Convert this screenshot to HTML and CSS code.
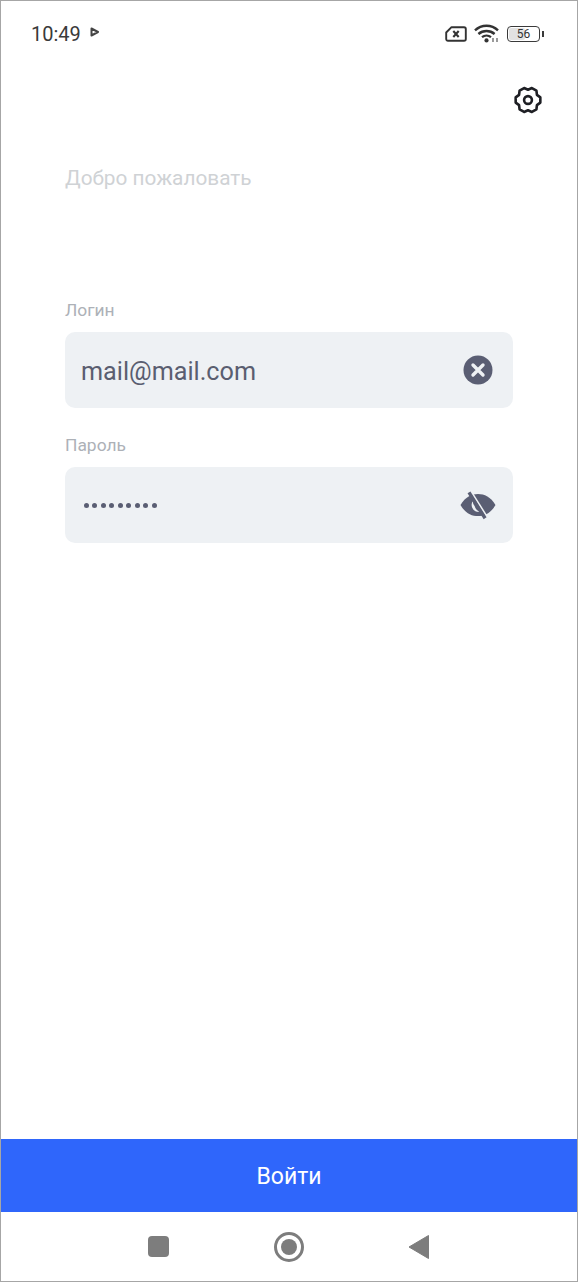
FILE: index.html
```html
<!DOCTYPE html>
<html lang="ru">
<head>
    <meta charset="UTF-8">
    <meta name="viewport" content="width=device-width, initial-scale=1.0">
    <title>Вход</title>
    <link rel="stylesheet" href="styles.css">
</head>
<body>

<div class="screen">
    <header class="status-bar">
        <div class="status-left">
            <span class="time">10:49</span>
            <svg class="play-icon" width="10" height="10" viewBox="0 0 10 10">
                <path d="M1.5 1.5 L8 5 L1.5 8.5 Z" fill="none" stroke="#444" stroke-width="2" stroke-linejoin="round"/>
            </svg>
        </div>
        <div class="status-right">
            <svg width="22" height="16" viewBox="0 0 22 16">
                <path d="M6.5 1.2 H19 a1.8 1.8 0 0 1 1.8 1.8 V13 a1.8 1.8 0 0 1 -1.8 1.8 H3 a1.8 1.8 0 0 1 -1.8 -1.8 V6.5 Z" fill="none" stroke="#333" stroke-width="1.9" stroke-linejoin="round"/>
                <path d="M8.3 5 L13.7 11 M13.7 5 L8.3 11" stroke="#333" stroke-width="2.1"/>
            </svg>
            <svg width="26" height="19" viewBox="0 0 26 19">
                <path d="M1 6.4 C7.5 0.2 17.5 0.2 24 6.4" fill="none" stroke="#333" stroke-width="2.4"/>
                <path d="M4.4 10 C9 6 16 6 20.6 10" fill="none" stroke="#333" stroke-width="2.4"/>
                <path d="M8 13.2 C10.6 11 14.4 11 17 13.2" fill="none" stroke="#333" stroke-width="2.2"/>
                <circle cx="12.5" cy="16.4" r="2.1" fill="#333"/>
                <path d="M19 18 V14 M23 14 V18" stroke="#666" stroke-width="1.3"/>
            </svg>
            <div class="battery">
                <div class="battery-body">
                    <span class="battery-level"></span>
                    <span class="battery-text">56</span>
                </div>
                <span class="battery-tip"></span>
            </div>
        </div>
    </header>

    <div class="settings-row">
        <svg width="30" height="30" viewBox="0 0 30 30">
            <path d="M27.33 12.38 L27.33 17.62 L23.92 20.15 L23.43 24.36 L18.89 26.98 L15 25.3 L11.11 26.98 L6.57 24.36 L6.08 20.15 L2.67 17.62 L2.67 12.38 L6.08 9.85 L6.57 5.64 L11.11 3.02 L15 4.7 L18.89 3.02 L23.43 5.64 L23.92 9.85 Z" fill="none" stroke="#1e1f24" stroke-width="2.6" stroke-linejoin="round"/>
            <circle cx="15" cy="15" r="3.9" fill="none" stroke="#1e1f24" stroke-width="2.6"/>
        </svg>
    </div>

    <main class="content">
        <h1 class="title">Добро пожаловать</h1>

        <label class="field-label field-label-login">Логин</label>
        <div class="field">
            <span class="field-value">mail@mail.com</span>
            <svg class="field-icon" width="30" height="30" viewBox="0 0 30 30">
                <circle cx="15" cy="15" r="14.5" fill="#5a5e73"/>
                <path d="M10 10 L20 20 M20 10 L10 20" stroke="#eef1f4" stroke-width="3.4" stroke-linecap="round"/>
            </svg>
        </div>

        <label class="field-label field-label-password">Пароль</label>
        <div class="field">
            <span class="field-dots">
                <i></i><i></i><i></i><i></i><i></i><i></i><i></i><i></i><i></i>
            </span>
            <svg class="field-icon eye-icon" width="36" height="32" viewBox="0 0 34 30">
                <path d="M0.5 15 C5 7 11 4.5 17 4.5 C23 4.5 29 7 33.5 15 C29 23 23 25.5 17 25.5 C11 25.5 5 23 0.5 15 Z" fill="#5a5e73"/>
                <path d="M12 11.5 A6.5 6.5 0 0 0 16 21.3 L18.6 21.6 A8.5 8.5 0 0 1 13.8 16 A8 8 0 0 1 12 11.5 Z" fill="#eef1f4"/>
                <path d="M10.6 2.4 L25.6 26.4" stroke="#eef1f4" stroke-width="1.8"/>
                <path d="M8.5 3 L23.7 27.5" stroke="#5a5e73" stroke-width="3.2"/>
            </svg>
        </div>
    </main>

    <button class="login-button">Войти</button>

    <nav class="nav-bar">
        <span class="nav-square"></span>
        <span class="nav-circle"><span></span></span>
        <svg width="22" height="26" viewBox="0 0 22 26">
            <path d="M20.5 1.5 V24.5 L1 13 Z" fill="#7d7d7d" stroke="#7d7d7d" stroke-width="1" stroke-linejoin="round"/>
        </svg>
    </nav>
</div>

</body>
</html>
```

FILE: styles.css
```css
* {
    box-sizing: border-box;
}
body {
    margin: 0;
    font-family: Roboto, 'Liberation Sans', sans-serif;
    background-color: #ffffff;
}
.screen {
    width: 578px;
    height: 1282px;
    border: 1px solid #a6a6a6;
    display: flex;
    flex-direction: column;
}
.status-bar {
    height: 64px;
    padding: 1px 33px 0 30px;
    display: flex;
    align-items: center;
    justify-content: space-between;
    flex-shrink: 0;
}
.status-left {
    display: flex;
    align-items: center;
    gap: 9px;
}
.time {
    font-size: 20px;
    color: #3a3a3a;
}
.play-icon {
    margin-top: -3px;
}
.status-right {
    display: flex;
    align-items: center;
    gap: 7px;
}
.battery {
    display: flex;
    align-items: center;
    gap: 2px;
}
.battery-body {
    width: 33px;
    height: 16px;
    border: 1.5px solid #3a3a3a;
    border-radius: 4px;
    position: relative;
    display: flex;
    align-items: center;
    justify-content: center;
}
.battery-level {
    position: absolute;
    left: 1px;
    top: 1px;
    bottom: 1px;
    width: 16px;
    background-color: #e2e2e2;
    border-radius: 2px;
}
.battery-text {
    position: relative;
    font-size: 12px;
    color: #333;
}
.battery-tip {
    width: 2px;
    height: 6px;
    background-color: #3a3a3a;
}
.settings-row {
    height: 69px;
    padding-right: 34px;
    display: flex;
    justify-content: flex-end;
    align-items: center;
    flex-shrink: 0;
}
.content {
    flex: 1;
    padding: 0 64px;
}
.title {
    margin: 0;
    padding-top: 30px;
    font-size: 20.8px;
    line-height: 28px;
    font-weight: 400;
    color: #cfd2d5;
}
.field-label {
    display: block;
    font-size: 17.4px;
    line-height: 20px;
    color: #adb1b7;
}
.field-label-login {
    margin-top: 108px;
    margin-bottom: 12px;
}
.field-label-password {
    margin-top: 27px;
    margin-bottom: 12px;
}
.field {
    height: 76px;
    padding: 0 20px 0 16px;
    display: flex;
    align-items: center;
    justify-content: space-between;
    background-color: #eef1f4;
    border-radius: 10px;
}
.field-value {
    padding-top: 3px;
    font-size: 25.2px;
    color: #5a5e70;
}
.field-dots {
    display: flex;
    gap: 3.45px;
    padding-left: 3px;
}
.field-dots i {
    width: 5px;
    height: 5px;
    border-radius: 50%;
    background-color: #5a5e73;
}
.eye-icon {
    margin-right: -3px;
}
.login-button {
    height: 73px;
    flex-shrink: 0;
    border: none;
    padding: 2px 0 0;
    background-color: #2f66fb;
    color: #ffffff;
    font-family: inherit;
    font-size: 23px;
}
.nav-bar {
    height: 69px;
    flex-shrink: 0;
    padding: 0 147px;
    display: flex;
    align-items: center;
    justify-content: space-between;
}
.nav-square {
    width: 21px;
    height: 21px;
    border-radius: 4px;
    background-color: #7d7d7d;
}
.nav-circle {
    width: 30px;
    height: 30px;
    border: 3px solid #7d7d7d;
    border-radius: 50%;
    display: flex;
    align-items: center;
    justify-content: center;
}
.nav-circle span {
    width: 16px;
    height: 16px;
    border-radius: 50%;
    background-color: #7d7d7d;
}
```
